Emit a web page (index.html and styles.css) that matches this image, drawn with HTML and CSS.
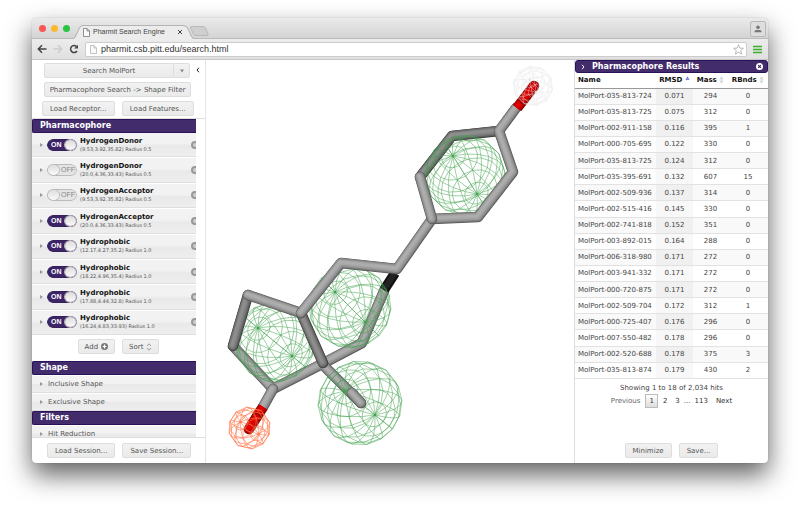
FILE: index.html
```html
<!DOCTYPE html>
<html lang="en">
<head>
<meta charset="utf-8">
<title>Pharmit Search Engine</title>
<link rel="stylesheet" href="styles.css">
</head>
<body>
<div class="window">
  <header class="tabstrip">
    <div class="lights"><i class="light red"></i><i class="light amber"></i><i class="light green"></i></div>
    <div class="tab">
      <svg class="tab-shape" viewBox="0 0 124 14" preserveAspectRatio="none"><path d="M0 14C4 14 4 12 6 8S8 .5 12 .5H110C114 .5 115 3 117 8S120 14 124 14" fill="#ececec" stroke="#b4b4b4"/></svg>
      <svg class="page-icon" viewBox="0 0 7 9"><path d="M.5.5H4L6.500 3V8.500H.5ZM4 .5V3H6.500" fill="#fafafa" stroke="#777" stroke-width=".8"/></svg>
      <span class="tab-title">Pharmit Search Engine</span>
      <button class="plain" aria-label="Close tab"><svg class="x-icon" viewBox="0 0 6 6"><path d="M1 1L5 5M5 1L1 5" stroke="#444"/></svg></button>
    </div>
    <svg class="new-tab" viewBox="0 0 20 10"><path d="M3 .5H14Q16 .5 17 3L19 8Q19.500 9.500 18 9.500H7Q5 9.500 4 7L1.500 2Q1 .5 3 .5Z" fill="#cfcfcf" stroke="#b8b8b8"/></svg>
    <button class="user" aria-label="User"><svg viewBox="0 0 8 8"><circle cx="4" cy="2.200" r="1.800" fill="#777"/><path d="M.5 7.300V6.500Q.5 4.800 4 4.800T7.500 6.500V7.300Z" fill="#777"/></svg></button>
  </header>
  <nav class="toolbar">
    <button class="plain" aria-label="Back"><svg class="nav-icon" viewBox="0 0 10 10"><path d="M9.500 5H1.500M5 1.300L1.300 5L5 8.700" fill="none" stroke="#444" stroke-width="1.500"/></svg></button>
    <button class="plain" aria-label="Forward"><svg class="nav-icon" viewBox="0 0 10 10"><path d="M.5 5H8.500M5 1.300L8.700 5L5 8.700" fill="none" stroke="#ccc" stroke-width="1.500"/></svg></button>
    <button class="plain" aria-label="Reload"><svg class="nav-icon" viewBox="0 0 10 10"><path d="M8 7A3.500 3.500 0 1 1 7.500 2.500" fill="none" stroke="#444" stroke-width="1.500"/><path d="M9 .7V4.500H5.200Z" fill="#444"/></svg></button>
    <div class="omnibox">
      <svg class="page-icon" viewBox="0 0 7 9"><path d="M.5.5H4L6.500 3V8.500H.5ZM4 .5V3H6.500" fill="#fafafa" stroke="#aaa" stroke-width=".7"/></svg>
      <input class="url" type="text" aria-label="Address" value="pharmit.csb.pitt.edu/search.html">
      <svg class="star" viewBox="0 0 12 12"><path d="M6 .8L7.500 4.500L11.400 4.700L8.400 7.200L9.400 11L6 8.900L2.600 11L3.600 7.200L.6 4.700L4.500 4.500Z" fill="#fff" stroke="#a0a0a0" stroke-width=".8"/></svg>
    </div>
    <button class="plain" aria-label="Menu"><svg class="menu-icon" viewBox="0 0 9 9"><path d="M0 1.500H9M0 4.500H9M0 7.500H9" stroke="#3fae29" stroke-width="1.500"/></svg></button>
  </nav>
  <main class="content">
    <aside class="sidebar">
      <div class="actions">
        <div class="split"><button class="btn grow">Search MolPort</button><button class="btn drop" aria-label="Choose library"><svg viewBox="0 0 6 4"><path d="M1 .5H5L3 3.500Z" fill="#888"/></svg></button></div>
        <button class="btn wide">Pharmacophore Search -&gt; Shape Filter</button>
        <div class="pair"><button class="btn grow">Load Receptor...</button><button class="btn grow">Load Features...</button></div>
        <button class="plain collapse" aria-label="Collapse"><svg viewBox="0 0 4 6"><path d="M3 .8L1 3L3 5.200" fill="none" stroke="#222"/></svg></button>
      </div>
      <div class="sections">
        <h2 class="bar">Pharmacophore</h2>
        <div class="features">
          <div class="feature"><i class="arrow"></i><label class="switch"><input type="checkbox" checked aria-label="HydrogenDonor 1"><span class="on">ON</span><span class="off">OFF</span></label><div class="info"><b>HydrogenDonor</b><small>(9.53,3.92,35.82) Radius 0.5</small></div><button class="plain remove" aria-label="Remove"></button></div>
          <div class="feature"><i class="arrow"></i><label class="switch"><input type="checkbox" aria-label="HydrogenDonor 2"><span class="on">ON</span><span class="off">OFF</span></label><div class="info"><b>HydrogenDonor</b><small>(20.0,4.36,33.43) Radius 0.5</small></div><button class="plain remove" aria-label="Remove"></button></div>
          <div class="feature"><i class="arrow"></i><label class="switch"><input type="checkbox" aria-label="HydrogenAcceptor 1"><span class="on">ON</span><span class="off">OFF</span></label><div class="info"><b>HydrogenAcceptor</b><small>(9.53,3.92,35.82) Radius 0.5</small></div><button class="plain remove" aria-label="Remove"></button></div>
          <div class="feature"><i class="arrow"></i><label class="switch"><input type="checkbox" checked aria-label="HydrogenAcceptor 2"><span class="on">ON</span><span class="off">OFF</span></label><div class="info"><b>HydrogenAcceptor</b><small>(20.0,4.36,33.43) Radius 0.5</small></div><button class="plain remove" aria-label="Remove"></button></div>
          <div class="feature"><i class="arrow"></i><label class="switch"><input type="checkbox" checked aria-label="Hydrophobic 1"><span class="on">ON</span><span class="off">OFF</span></label><div class="info"><b>Hydrophobic</b><small>(12.17,4.27,35.2) Radius 1.0</small></div><button class="plain remove" aria-label="Remove"></button></div>
          <div class="feature"><i class="arrow"></i><label class="switch"><input type="checkbox" checked aria-label="Hydrophobic 2"><span class="on">ON</span><span class="off">OFF</span></label><div class="info"><b>Hydrophobic</b><small>(18.22,4.96,35.4) Radius 1.0</small></div><button class="plain remove" aria-label="Remove"></button></div>
          <div class="feature"><i class="arrow"></i><label class="switch"><input type="checkbox" checked aria-label="Hydrophobic 3"><span class="on">ON</span><span class="off">OFF</span></label><div class="info"><b>Hydrophobic</b><small>(17.88,4.44,32.8) Radius 1.0</small></div><button class="plain remove" aria-label="Remove"></button></div>
          <div class="feature"><i class="arrow"></i><label class="switch"><input type="checkbox" checked aria-label="Hydrophobic 4"><span class="on">ON</span><span class="off">OFF</span></label><div class="info"><b>Hydrophobic</b><small>(16.24,4.83,33.93) Radius 1.0</small></div><button class="plain remove" aria-label="Remove"></button></div>
        </div>
        <div class="feature-tools">
          <button class="btn">Add <svg class="add-icon" viewBox="0 0 8 8"><circle cx="4" cy="4" r="4" fill="#777"/><path d="M4 1.800V6.200M1.800 4H6.200" stroke="#fff" stroke-width="1.400"/></svg></button>
          <button class="btn">Sort <svg class="sort-icon" viewBox="0 0 6 8"><path d="M1 3L3 .8L5 3M1 5L3 7.200L5 5" fill="none" stroke="#888" stroke-width=".8"/></svg></button>
        </div>
        <h2 class="bar">Shape</h2>
        <div class="group"><i class="arrow"></i>Inclusive Shape</div>
        <div class="group"><i class="arrow"></i>Exclusive Shape</div>
        <h2 class="bar">Filters</h2>
        <div class="group"><i class="arrow"></i>Hit Reduction</div>
      </div>
      <div class="session"><button class="btn">Load Session...</button><button class="btn">Save Session...</button></div>
    </aside>
    <section class="viewer"><svg id="scene" viewBox="206 60 368 403" role="img" aria-label="Molecule"></svg></section>
    <aside class="results">
      <h2 class="results-bar"><svg class="chev" viewBox="0 0 4 6"><path d="M1 .8L3 3L1 5.200" fill="none" stroke="#fff"/></svg><span>Pharmacophore Results</span><button class="plain" aria-label="Close"><svg class="close-icon" viewBox="0 0 8 8"><circle cx="4" cy="4" r="4" fill="#fff"/><path d="M2.500 2.500L5.500 5.500M5.500 2.500L2.500 5.500" stroke="#3a2364" stroke-width="1.300"/></svg></button></h2>
      <table class="hits">
        <thead><tr><th>Name</th><th>RMSD <svg class="up" viewBox="0 0 6 9"><path d="M3 0L5.500 4.500H.5Z" fill="#8080e0"/></svg></th><th>Mass <svg class="both" viewBox="0 0 6 9"><path d="M3 0L5.500 4H.5ZM3 9L5.500 5H.5Z" fill="#d4d4d4"/></svg></th><th>RBnds <svg class="both" viewBox="0 0 6 9"><path d="M3 0L5.500 4H.5ZM3 9L5.500 5H.5Z" fill="#d4d4d4"/></svg></th></tr></thead>
        <tbody>
          <tr><td>MolPort-035-813-724</td><td>0.071</td><td>294</td><td>0</td></tr>
          <tr><td>MolPort-035-813-725</td><td>0.075</td><td>312</td><td>0</td></tr>
          <tr><td>MolPort-002-911-158</td><td>0.116</td><td>395</td><td>1</td></tr>
          <tr><td>MolPort-000-705-695</td><td>0.122</td><td>330</td><td>0</td></tr>
          <tr><td>MolPort-035-813-725</td><td>0.124</td><td>312</td><td>0</td></tr>
          <tr><td>MolPort-035-395-691</td><td>0.132</td><td>607</td><td>15</td></tr>
          <tr><td>MolPort-002-509-936</td><td>0.137</td><td>314</td><td>0</td></tr>
          <tr><td>MolPort-002-515-416</td><td>0.145</td><td>330</td><td>0</td></tr>
          <tr><td>MolPort-002-741-818</td><td>0.152</td><td>351</td><td>0</td></tr>
          <tr><td>MolPort-003-892-015</td><td>0.164</td><td>288</td><td>0</td></tr>
          <tr><td>MolPort-006-318-980</td><td>0.171</td><td>272</td><td>0</td></tr>
          <tr><td>MolPort-003-941-332</td><td>0.171</td><td>272</td><td>0</td></tr>
          <tr><td>MolPort-000-720-875</td><td>0.171</td><td>272</td><td>0</td></tr>
          <tr><td>MolPort-002-509-704</td><td>0.172</td><td>312</td><td>1</td></tr>
          <tr><td>MolPort-000-725-407</td><td>0.176</td><td>296</td><td>0</td></tr>
          <tr><td>MolPort-007-550-482</td><td>0.178</td><td>296</td><td>0</td></tr>
          <tr><td>MolPort-002-520-688</td><td>0.178</td><td>375</td><td>3</td></tr>
          <tr><td>MolPort-035-813-874</td><td>0.179</td><td>430</td><td>2</td></tr>
        </tbody>
      </table>
      <p class="count">Showing 1 to 18 of 2,034 hits</p>
      <div class="pager"><a class="dim" href="#">Previous</a><a class="current" href="#">1</a><a href="#">2</a><a href="#">3</a><span>...</span><a href="#">113</a><a href="#">Next</a></div>
      <div class="result-actions"><button class="btn">Minimize</button><button class="btn">Save...</button></div>
    </aside>
  </main>
</div>
<script src="scene.js"></script>
</body>
</html>
```
FILE: styles.css
```css
* { box-sizing: border-box; }
body {
  margin: 0;
  background: #fff;
  color: #444;
  font: 7px/10px "DejaVu Sans", Verdana, sans-serif;
}
button, input { font: inherit; color: inherit; }
svg { display: block; flex: none; }
.plain { border: 0; padding: 0; background: none; display: flex; }
.window {
  height: calc(100vh - 64px);
  min-height: 445px;
  margin: 18px 32px 46px;
  display: flex;
  flex-direction: column;
  overflow: hidden;
  border-radius: 4px;
  background: #fff;
  box-shadow: 0 0 1px rgba(0,0,0,.4), 0 12px 26px rgba(0,0,0,.62);
}
.tabstrip {
  height: 21px;
  flex: none;
  display: flex;
  align-items: flex-end;
  padding: 0 2px 0 7px;
  background: linear-gradient(#eaeaea, #d4d4d4);
  border-bottom: 1px solid #bbb;
}
.lights { display: flex; gap: 5px; align-self: center; }
.light { width: 7px; height: 7px; border-radius: 50%; }
.red { background: #fb5753; }
.amber { background: #fcb82f; }
.green { background: #29c440; }
.tab { position: relative; width: 126px; height: 14px; margin: 0 0 -1px 1px; padding: 0 14px 0 12px; display: flex; align-items: center; gap: 3px; }
.tab > * { position: relative; }
.tab .tab-shape { position: absolute; inset: 0; width: 100%; height: 100%; }
.page-icon { width: 7px; height: 9px; }
.tab-title { flex: 1; color: #444; font: 7px/10px "Liberation Sans", Arial, sans-serif; }
.x-icon { width: 6px; height: 6px; }
.new-tab { width: 20px; height: 10px; margin: 0 0 2px -8px; }
.user { width: 16px; height: 16px; padding: 3px; margin: 0 0 1px auto; border: 1px solid #b8b8b8; border-radius: 2px; background: #dedede; }
.user svg { width: 8px; height: 8px; }
.toolbar {
  height: 21px;
  flex: none;
  display: flex;
  align-items: center;
  gap: 6px;
  padding: 0 6px 0 5px;
  background: linear-gradient(#ececec, #e0e0e0);
  border-bottom: 1px solid #c8c8c8;
}
.nav-icon { width: 10px; height: 10px; }
.omnibox { flex: 1; height: 15px; display: flex; align-items: center; gap: 4px; padding: 0 2px 0 4px; background: #fff; border: 1px solid #ccc; border-radius: 2px; }
.url { flex: 1; min-width: 0; height: 13px; padding: 0; border: 0; outline: 0; background: none; color: #333; font: 9px/13px "Liberation Sans", Arial, sans-serif; }
.star { width: 11px; height: 11px; }
.menu-icon { width: 9px; height: 9px; }

.content { flex: 1; min-height: 0; display: flex; }
.btn {
  height: 15px;
  padding: 0 7px;
  border: 1px solid #ddd;
  border-radius: 2px;
  background: linear-gradient(#f2f2f2, #eaeaea);
  color: #555;
  white-space: nowrap;
  display: flex;
  align-items: center;
  justify-content: center;
}
.grow { flex: 1; }
.sidebar { width: 174px; flex: none; display: flex; flex-direction: column; border-right: 1px solid #e4e4e4; }
.actions { position: relative; padding: 3px 11px 2px 10px; display: flex; flex-direction: column; gap: 4px; border-bottom: 1px solid #ddd; }
.split { display: flex; margin: 0 4px 0 2px; }
.split .grow { border-radius: 2px 0 0 2px; border-right: 0; }
.split .drop { width: 17px; padding: 0; border-radius: 0 2px 2px 0; }
.drop svg { width: 6px; height: 4px; }
.wide { margin: 0 3px 0 2px; }
.pair { display: flex; gap: 7px; }
.pair .btn { padding: 0; }
.collapse { position: absolute; right: 5px; top: 7px; }
.collapse svg { width: 4px; height: 6px; }
.sections { flex: 1; min-height: 0; overflow: hidden; padding-right: 9px; }
.bar { margin: 0; height: 14px; padding-left: 7px; border: 1px solid #2a1258; border-right: 0; border-radius: 2px 0 0 2px; background: #432c6c; color: #fff; font-size: 8px; line-height: 12px; font-weight: bold; }
.features { height: 202px; display: grid; grid-auto-rows: 1fr; gap: 1px; }
.feature, .group { display: flex; align-items: center; background: linear-gradient(#f2f2f2 45%, #e9e9e9 55%, #eee); border-bottom: 1px solid #dedede; overflow: hidden; }
.feature { padding-left: 8px; }
.arrow { width: 0; height: 0; border: 2px solid transparent; border-left: 3px solid #999; border-right: 0; flex: none; }
.switch { position: relative; width: 30px; height: 12px; margin: 0 3px 0 4px; flex: none; border-radius: 6px; overflow: hidden; font-family: "Liberation Sans", Arial, sans-serif; }
.switch input { position: absolute; inset: 0; width: 100%; height: 100%; margin: 0; appearance: none; border: 1px solid #bbb; border-radius: 6px; background: #e4e4e4; }
.switch input:checked { background: #3d2466; border-color: #36205c; }
.switch input::before { content: ""; position: absolute; left: 0; top: 0; width: 11px; height: 10px; border-radius: 50%; background: linear-gradient(#ddd, #fafafa); box-shadow: 0 0 0 1px #bbb; }
.switch input:checked::before { left: auto; right: 0; }
.switch span { position: relative; display: none; line-height: 12px; pointer-events: none; }
.switch .on { padding-left: 4px; color: #fff; font-weight: bold; }
.switch .off { padding-left: 14px; color: #888; }
.switch input:checked ~ .on, .switch input:not(:checked) ~ .off { display: block; }
.info { flex: 1; min-width: 0; display: flex; flex-direction: column; white-space: nowrap; }
.info b { color: #111; font-size: 7px; line-height: 9px; }
.info small { color: #555; font-size: 5px; line-height: 7px; }
.remove { width: 8px; height: 8px; margin-right: -3px; border: 2px solid #999; border-radius: 50%; background: #ccc; flex: none; }
.feature-tools { display: flex; justify-content: center; gap: 7px; padding: 4px 0 7px 9px; }
.feature-tools .btn { padding: 0 6px; }
.add-icon { width: 7px; height: 7px; margin-left: 3px; }
.sort-icon { width: 6px; height: 8px; margin-left: 3px; }
.group { height: 17px; margin-top: 1px; padding-left: 8px; gap: 5px; color: #555; }
.session { display: flex; gap: 7px; height: 26px; padding: 5px 0 0 15px; border-top: 1px solid #ddd; }

.viewer { flex: 1; min-width: 0; }
.viewer svg { width: 100%; height: 100%; }

.results { width: 194px; flex: none; display: flex; flex-direction: column; border-left: 1px solid #ddd; }
.results-bar { margin: 0; height: 13px; padding: 0 4px 0 5px; display: flex; align-items: center; background: #432c6c; border: 1px solid #2a1258; border-radius: 3px; color: #fff; font-size: 8px; line-height: 11px; }
.results-bar span { flex: 1; margin-left: 7px; }
.chev { width: 4px; height: 6px; }
.close-icon { width: 7px; height: 7px; }
.hits { width: 100%; height: 306px; table-layout: fixed; border-collapse: collapse; border-bottom: 1px solid #999; }
.hits th { height: 15px; padding: 0; border-bottom: 1px solid #999; color: #111; font-weight: bold; white-space: nowrap; }
.hits th:first-child, .hits td:first-child { width: 81px; padding-left: 3px; text-align: left; }
.hits th:nth-child(2) { width: 37px; }
.hits th:nth-child(3) { width: 35px; }
.hits th svg { display: inline-block; width: 5px; height: 8px; vertical-align: middle; }
.hits td { padding: 0; text-align: center; border-bottom: 1px solid #e2e2e2; white-space: nowrap; }
.hits tbody tr:nth-child(odd) { background: #f9f9f9; }
.hits tbody td:nth-child(2) { background: #f8f8f8; }
.hits tbody tr:nth-child(odd) td:nth-child(2) { background: #f0f0f0; }
.count { margin: 4px 0 1px; text-align: center; }
.pager { display: flex; justify-content: center; align-items: center; }
.pager a { padding: 1px 3px; color: #333; text-decoration: none; border: 1px solid transparent; }
.pager .dim { color: #666; }
.pager .current { margin: 0 1px; border-color: #bbb; background: linear-gradient(#fff, #ddd); }
.result-actions { margin-top: auto; padding-bottom: 5px; display: flex; justify-content: center; gap: 7px; }
```
FILE: scene.js
```js
const svg = document.getElementById('scene');
const NS = 'http://www.w3.org/2000/svg';

function add(tag, attrs) {
  const el = document.createElementNS(NS, tag);
  for (const k in attrs) el.setAttribute(k, attrs[k]);
  svg.appendChild(el);
}

// Latitude/longitude wireframe; (px, py) is the projected offset of the pole.
function sphere(cx, cy, r, px, py, color, width, n = 16, rows = 10) {
  const p = [px / r, py / r, 0];
  p[2] = Math.sqrt(1 - p[0] * p[0] - p[1] * p[1]);
  const len = Math.hypot(p[0], p[1]);
  const u = [-p[1] / len, p[0] / len, 0];
  const v = [p[1] * u[2] - p[2] * u[1], p[2] * u[0] - p[0] * u[2]];
  const point = (i, j) => {
    const a = Math.PI * i / rows, b = 2 * Math.PI * j / n;
    const s = Math.sin(a), c = Math.cos(a);
    const x = c * p[0] + s * (Math.cos(b) * u[0] + Math.sin(b) * v[0]);
    const y = c * p[1] + s * (Math.cos(b) * u[1] + Math.sin(b) * v[1]);
    return (cx + r * x).toFixed(1) + ' ' + (cy + r * y).toFixed(1);
  };
  let d = '';
  for (let j = 0; j < n; j++) {
    d += 'M' + point(0, j);
    for (let i = 1; i <= rows; i++) d += 'L' + point(i, j);
  }
  for (let i = 1; i < rows; i++) {
    d += 'M' + point(i, 0);
    for (let j = 1; j <= n; j++) d += 'L' + point(i, j);
  }
  add('path', { d, fill: 'none', stroke: color, 'stroke-width': width });
  add('circle', { cx: cx + px, cy: cy + py, r: 1, fill: color });
  add('circle', { cx: cx - px, cy: cy - py, r: 1, fill: color });
}

const greys = [['#555', 10.5], ['#7a7a7a', 9.5], ['#8c8c8c', 8], ['#9a9a9a', 6.5], ['#a6a6a6', 4.5], ['#adadad', 2.5]];
const darks = [['#3a3a3a', 10.5], ['#5a5a5a', 9.5], ['#6c6c6c', 8], ['#7a7a7a', 6.5], ['#868686', 4.5], ['#8e8e8e', 2.5]];
const reds = [['#800000', 10.5], ['#b00000', 9], ['#cc0000', 7], ['#e00000', 4]];

function bonds(d, shades, cap = 'round') {
  shades.forEach(([stroke, w], i) => add('path', {
    d, fill: 'none', stroke, 'stroke-width': w, 'stroke-linecap': cap, 'stroke-linejoin': 'round',
    transform: `translate(${-i * 0.2} ${-i * 0.2})`
  }));
}

const green = '#40a04c';
bonds('M499 131L452 136L420 177', darks);
bonds('M384 291L362 343L322 364', greys);
bonds('M395 273L384 290', [['#111', 10], ['#222', 6]], 'butt');
bonds('M233 346L273 389L322 364L361 403', greys);
sphere(465, 175, 40, -12, -19, green, 0.5);
sphere(350, 307, 41, -15, -15, green, 0.5);
sphere(275, 342, 40, -17, -14, green, 0.5);
sphere(360, 403, 42, -15, -12, green, 0.5);
bonds('M352 393L361 403', greys);
bonds('M301 313L323 363', darks);
bonds('M248 295L233 346', darks);
bonds('M248 295L301 313', greys);
bonds('M516 108L499 131L513 172L478 217L432 219L397 269L341 263L301 313', greys);
bonds('M420 177L432 219', greys);
bonds('M273 389L263 407', greys);
bonds('M517 108L524 99', reds, 'butt');
bonds('M534 86L524 99', reds);
bonds('M263 407L256 418', reds, 'butt');
bonds('M256 418L249 429', reds);
sphere(533, 86, 20, -3, -6, '#e4e4e4', 0.4, 10, 8);
sphere(249.5, 428, 21, -9, -6, '#ff7547', 0.6, 10, 8);
```
